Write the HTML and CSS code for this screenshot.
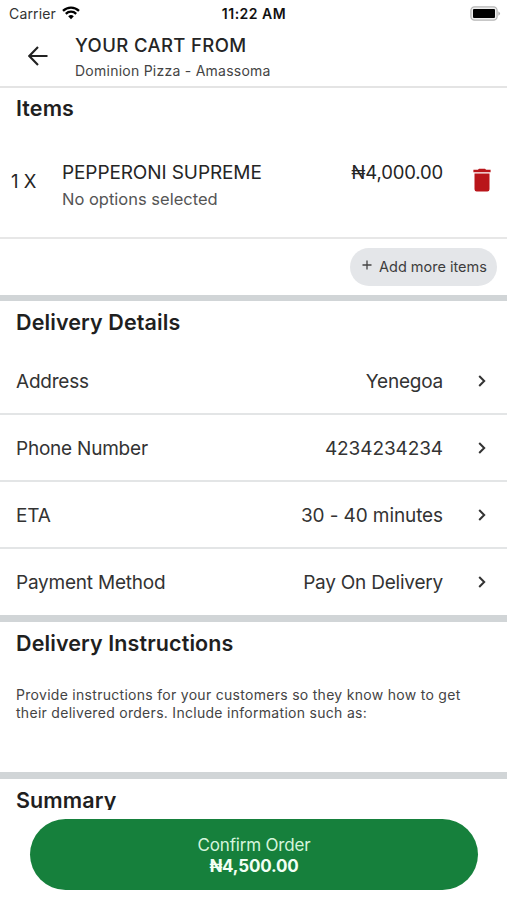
FILE: index.html
```
<!DOCTYPE html>
<html lang="en">
<head>
<meta charset="utf-8">
<title>Your cart</title>
<link rel="stylesheet" href="styles.css">
</head>
<body>
<div class="screen">
  <div class="status">
    <div class="carrier"><span>Carrier</span>
      <svg class="wifi" viewBox="0 0 18 14"><path d="M9 13.2 6.2 10.3a4 4 0 0 1 5.6 0Z"/><path class="arc" d="M3.8 7.8a7.5 7.5 0 0 1 10.4 0M1 4.8a11.6 11.6 0 0 1 16 0"/></svg>
    </div>
    <span class="time">11:22 AM</span>
    <svg class="battery" viewBox="0 0 31 15"><rect class="shell" x=".9" y=".9" width="26.2" height="13.2" rx="3.6"/><rect x="3" y="3" width="22" height="9" rx="1"/><path class="tip" d="M28.4 5.2q3.200 2.300 0 4.600Z"/></svg>
  </div>
  <header class="header">
    <svg class="back" viewBox="0 0 20 20"><path d="M19.5 10H1.5M10 1 1.3 10 10 19"/></svg>
    <div class="heading">
      <h1 class="title">YOUR CART FROM</h1>
      <p class="store">Dominion Pizza - Amassoma</p>
    </div>
  </header>
  <main class="content">
    <section class="items">
      <h2 class="section-title">Items</h2>
      <div class="item">
        <span class="qty">1 X</span>
        <div class="item-text"><span class="item-name">PEPPERONI SUPREME</span><span class="options">No options selected</span></div>
        <span class="price">₦4,000.00</span>
        <svg class="trash" viewBox="0 0 18 24"><path d="M1.5 5.5h15v15.700a2.200 2.200 0 0 1-2.200 2.200H3.700a2.200 2.200 0 0 1-2.200-2.200ZM.4 1.800h4.500L6 .8h6l1.100 1h4.500v2.500H.4Z"/></svg>
      </div>
      <div class="add-row"><button class="add"><svg class="plus" viewBox="0 0 10 10"><path d="M5 .5v9M.5 5h9"/></svg><span class="add-label">Add more items</span></button></div>
    </section>
    <section class="details">
      <h2 class="section-title">Delivery Details</h2>
      <div class="row"><span>Address</span><span class="value">Yenegoa</span><svg class="chevron" viewBox="0 0 8 12"><path d="m1.2 1 5 5-5 5"/></svg></div>
      <div class="row"><span>Phone Number</span><span class="value digits">4234234234</span><svg class="chevron" viewBox="0 0 8 12"><path d="m1.2 1 5 5-5 5"/></svg></div>
      <div class="row"><span>ETA</span><span class="value digits">30 - 40 minutes</span><svg class="chevron" viewBox="0 0 8 12"><path d="m1.2 1 5 5-5 5"/></svg></div>
      <div class="row"><span>Payment Method</span><span class="value">Pay On Delivery</span><svg class="chevron" viewBox="0 0 8 12"><path d="m1.2 1 5 5-5 5"/></svg></div>
    </section>
    <section class="instructions">
      <h2 class="section-title">Delivery Instructions</h2>
      <p class="hint">Provide instructions for your customers so they know how to get<br>their delivered orders. Include information such as:</p>
    </section>
    <section class="summary"><h2 class="section-title">Summary</h2></section>
  </main>
  <footer class="footer"><button class="confirm"><span class="confirm-label">Confirm Order</span><strong class="total">₦4,500.00</strong></button></footer>
</div>
</body>
</html>
```
FILE: styles.css
```
* { box-sizing: border-box; }
body { margin: 0; background: #fff; color: #252525; font-family: Inter, "Open Sans", sans-serif; }
h1, h2, p { margin: 0; }
button { border: 0; padding: 0; font-family: inherit; color: inherit; }
svg { display: block; flex: none; }

.screen { width: 507px; height: 900px; display: flex; flex-direction: column; overflow: hidden; }

.status { height: 27px; display: grid; grid-template-columns: 1fr auto 1fr; align-items: center; padding: 0 6px 0 9px; }
.carrier { display: flex; align-items: center; gap: 6px; font-size: 14px; letter-spacing: .15px; color: #333; }
.wifi { width: 18px; height: 14px; margin-top: -2px; }
.wifi .arc { fill: none; stroke: #000; stroke-width: 2.3; }
.time { margin-left: -2px; font-size: 14px; font-weight: 600; letter-spacing: .5px; color: #111; }
.battery { width: 31px; height: 15px; margin-top: -1px; justify-self: end; }
.battery .shell { fill: #eee; stroke: #b5b5b5; stroke-width: 1.3; }
.battery .tip { fill: #aaa; }

.header { height: 61px; display: flex; align-items: flex-start; padding: 7px 0 0 28px; border-bottom: 2px solid #e4e4e4; }
.back { width: 20px; height: 20px; margin-top: 12px; fill: none; stroke: #222; stroke-width: 2.1; }
.heading { margin-left: 27px; }
.title { font-size: 18.5px; line-height: 22px; font-weight: 500; letter-spacing: .38px; }
.store { margin-top: 6px; font-size: 14px; line-height: 18px; letter-spacing: .25px; color: #444; }

.content { height: 722px; overflow: hidden; flex: none; }
.section-title { padding-left: 16px; font-size: 21.5px; line-height: 26px; font-weight: 600; letter-spacing: .1px; color: #1f1f1f; }

.items { height: 213px; padding-top: 7px; border-bottom: 6px solid #d1d5d7; }
.item { height: 118px; display: flex; align-items: flex-start; padding: 40px 16px 0 11px; border-bottom: 2px solid #e7e7e7; font-size: 19px; line-height: 24px; }
.qty { width: 51px; margin-top: 8px; font-size: 18.5px; }
.item-text { display: flex; flex-direction: column; }
.item-name { letter-spacing: -.1px; }
.options { margin-top: 2px; font-size: 16.5px; color: #555; }
.price { margin: -1px 0 0 auto; font-size: 18.5px; letter-spacing: -.15px; }
.trash { width: 18px; height: 24px; margin: 7px 0 0 30px; fill: #b9151a; }
.add-row { display: flex; justify-content: flex-end; padding: 9px 10px 0 0; }
.add { width: 147px; height: 38px; border-radius: 19px; background: #e4e6e9; display: flex; align-items: center; padding: 0 0 1px 12px; color: #3d3d3d; }
.plus { width: 10px; height: 10px; margin: -3px 7px 0 0; fill: none; stroke: #444; stroke-width: 1.3; }
.add-label { font-size: 14.5px; }

.details { height: 321px; padding-top: 8px; border-bottom: 7px solid #d1d5d7; }
.row { height: 67px; display: flex; align-items: center; padding: 2px 21px 0 16px; border-bottom: 2px solid #e3e5e6; font-size: 19px; letter-spacing: -.22px; color: #333; }
.details .section-title + .row { height: 80px; padding-top: 14px; }
.row:last-child { height: 65px; border-bottom: 0; }
.value { margin-left: auto; }
.digits { letter-spacing: -.1px; }
.chevron { width: 8px; height: 12px; margin: -1px 0 0 35px; fill: none; stroke: #333; stroke-width: 2; }

.instructions { height: 157px; padding-top: 8px; border-bottom: 7px solid #d1d5d7; }
.hint { padding: 30px 16px 0; font-size: 14px; line-height: 17.5px; letter-spacing: .29px; color: #444; }
.summary { padding-top: 8px; }

.footer { flex: none; height: 90px; padding: 9px 29px 0 30px; }
.confirm { width: 448px; height: 71px; border-radius: 36px; background: #16803c; color: #f2fff4; display: flex; flex-direction: column; align-items: center; justify-content: center; padding-top: 2px; font-size: 17px; line-height: 21px; letter-spacing: -.17px; }
.confirm-label { color: #d5f5dc; }
.total { font-size: 17px; }
```
